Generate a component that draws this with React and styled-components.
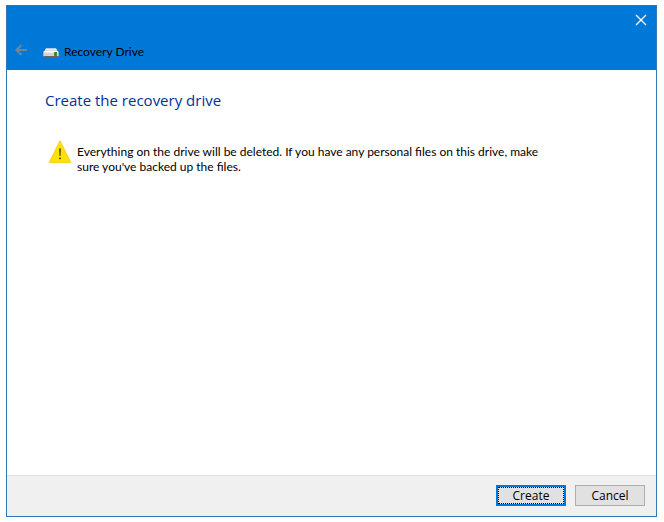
import React from "react";
import styled, { createGlobalStyle } from "styled-components";

export default function App() {
  return (
    <>
      <GlobalStyle />
      <Dialog>
        <Header>
          <TitleBar>
            <CloseButton type="button" aria-label="Close">
              <CloseIcon />
            </CloseButton>
          </TitleBar>
          <NavBar>
            <BackButton type="button" aria-label="Back" disabled>
              <BackIcon />
            </BackButton>
            <DriveIcon />
            <Caption>Recovery Drive</Caption>
          </NavBar>
        </Header>
        <Content>
          <Heading>Create the recovery drive</Heading>
          <Warning>
            <WarningIcon />
            <Message>
              Everything on the drive will be deleted. If you have any personal
              files on this drive, make sure you've backed up the files.
            </Message>
          </Warning>
        </Content>
        <Footer>
          <Button type="button" $primary>
            Create
          </Button>
          <Button type="button">Cancel</Button>
        </Footer>
      </Dialog>
    </>
  );
}

function CloseIcon() {
  return (
    <svg width="12" height="12" viewBox="0 0 12 12" fill="none">
      <path d="M1 1L11 11M11 1L1 11" stroke="#ffffff" strokeWidth="1.3" />
    </svg>
  );
}

function BackIcon() {
  return (
    <svg width="12" height="12" viewBox="0 0 12 12" fill="none">
      <path d="M12 6H1.5M6.4 1L1.4 6L6.4 11" stroke="#6f8698" strokeWidth="2" />
    </svg>
  );
}

function DriveIcon() {
  return (
    <svg width="16" height="14" viewBox="0 0 16 14">
      <path d="M3 4.6H13L15.2 8H0.8Z" fill="#d9dadc" />
      <path d="M3 4.6H13L13.8 6H2.2Z" fill="#ececec" />
      <rect x="0.3" y="7" width="15.4" height="6" rx="1.4" fill="#d5d3d1" />
      <rect x="1" y="7" width="14" height="1.4" rx="0.7" fill="#ffffff" />
      <rect x="0.8" y="12" width="14.4" height="1.2" rx="0.6" fill="#6e6259" />
      <rect x="11" y="8" width="3" height="4" fill="#4b9140" />
      <rect x="12" y="9" width="1" height="2" fill="#2d7a20" />
    </svg>
  );
}

function WarningIcon() {
  return (
    <svg width="24" height="24" viewBox="0 0 24 24">
      <path
        d="M12 1.8L22.8 23.4H1.2Z"
        fill="#fde100"
        stroke="#f3cf2c"
        strokeWidth="1"
        strokeLinejoin="round"
      />
      <path d="M11.3 9.5H12.7L12.4 17H11.6Z" fill="#1c1a05" />
      <rect x="11.3" y="18.6" width="1.4" height="1.6" fill="#1c1a05" />
    </svg>
  );
}

const GlobalStyle = createGlobalStyle`
  * {
    box-sizing: border-box;
  }
  body {
    margin: 0;
    background: #ffffff;
    color: #000000;
    font-family: Lato, "Open Sans", sans-serif;
    font-size: 12px;
    line-height: 15px;
  }
  svg {
    display: block;
    flex-shrink: 0;
  }
`;

const Dialog = styled.main`
  display: flex;
  flex-direction: column;
  min-height: calc(100vh - 10px);
  margin: 5px 7px 5px 6px;
  border: 1px solid #3279b3;
`;

const Header = styled.header`
  background: #0078d7;
`;

const TitleBar = styled.div`
  display: flex;
  justify-content: flex-end;
  height: 28px;
`;

const CloseButton = styled.button`
  display: flex;
  align-items: center;
  justify-content: center;
  width: 30px;
  height: 28px;
  padding: 0;
  border: none;
  background: transparent;
`;

const NavBar = styled.div`
  display: flex;
  align-items: center;
  height: 36px;
  padding: 0 8px 2px;
`;

const BackButton = styled.button`
  margin: 0 16px 2px 0;
  padding: 0;
  border: none;
  background: transparent;
`;

const Caption = styled.span`
  margin-left: 5px;
`;

const Content = styled.section`
  flex: 1;
  padding: 19px 38px;
`;

const Heading = styled.h1`
  margin: 0;
  color: #003399;
  font-family: "Open Sans", sans-serif;
  font-size: 15px;
  font-weight: 400;
  line-height: 22px;
`;

const Warning = styled.div`
  display: flex;
  gap: 5px;
  margin-top: 28px;
  padding-left: 3px;
`;

const Message = styled.p`
  max-width: 480px;
  margin: 5px 0 0;
`;

const Footer = styled.footer`
  display: flex;
  justify-content: flex-end;
  gap: 9px;
  padding: 9px 11px 10px;
  border-top: 1px solid #dfdfdf;
  background: #f0f0f0;
`;

const Button = styled.button`
  width: 70px;
  height: 21px;
  padding: 0;
  border: ${({ $primary }) =>
    $primary ? "2px solid #0078d7" : "1px solid #adadad"};
  outline: ${({ $primary }) => ($primary ? "1px dotted #000000" : "none")};
  outline-offset: -3px;
  background: #e1e1e1;
  color: #000000;
  font-family: "Open Sans", sans-serif;
  font-size: 12px;
  line-height: 15px;
`;
